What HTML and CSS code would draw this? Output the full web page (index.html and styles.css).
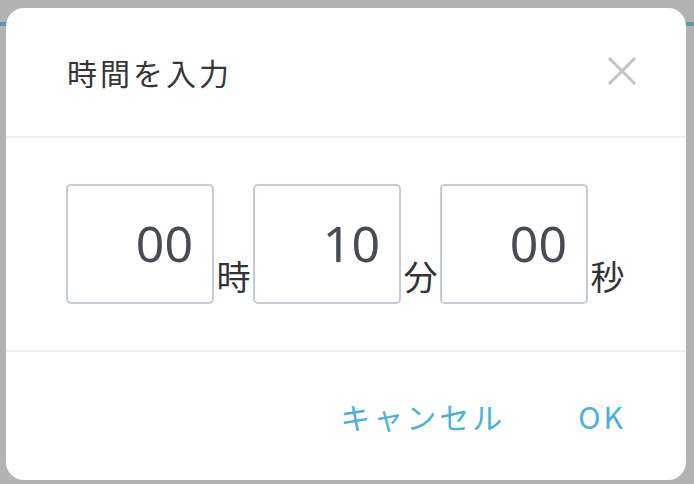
FILE: index.html
```html
<!DOCTYPE html>
<html lang="ja">
<head>
<meta charset="utf-8">
<title>時間を入力</title>
<link rel="stylesheet" href="styles.css">
</head>
<body>
<div class="page">
  <div class="page-bar"></div>
</div>
<div class="overlay">
  <div class="dialog">
    <div class="dialog-header">
      <h1 class="dialog-title">時間を入力</h1>
      <button class="close-btn" aria-label="閉じる">
        <svg width="30" height="30" viewBox="0 0 30 30"><path d="M2 2 L28 28 M28 2 L2 28" stroke="#c3c3c3" stroke-width="3" fill="none"/></svg>
      </button>
    </div>
    <div class="dialog-body">
      <div class="time-field"><span class="time-value">00</span></div>
      <span class="time-unit">時</span>
      <div class="time-field"><span class="time-value">10</span></div>
      <span class="time-unit">分</span>
      <div class="time-field"><span class="time-value">00</span></div>
      <span class="time-unit">秒</span>
    </div>
    <div class="dialog-footer">
      <button class="text-btn">キャンセル</button>
      <button class="text-btn">OK</button>
    </div>
  </div>
</div>
</body>
</html>
```
FILE: styles.css
```css
html, body {
  margin: 0;
  padding: 0;
}
body {
  width: 694px;
  height: 484px;
  background: #b3b3b3;
  overflow: hidden;
  position: relative;
  font-family: "Noto Sans CJK JP", "Noto Sans", sans-serif;
}
.page {
  padding-top: 22px;
}
.page-bar {
  height: 4px;
  background: #5f96a8;
}
.overlay {
  position: absolute;
  left: 6px;
  top: 8px;
}
.dialog {
  width: 680px;
  height: 472px;
  background: #ffffff;
  border-radius: 18px;
  display: flex;
  flex-direction: column;
  overflow: hidden;
}
.dialog-header {
  height: 128px;
  flex: none;
  display: flex;
  align-items: center;
  justify-content: space-between;
  padding: 0 49px 0 61px;
  border-bottom: 2px solid #efefef;
}
.dialog-title {
  margin: 0;
  font-size: 30px;
  font-weight: normal;
  letter-spacing: 3px;
  color: #363636;
  line-height: 1;
}
.close-btn {
  border: 0;
  background: none;
  padding: 0;
  width: 30px;
  height: 30px;
  display: flex;
  margin-top: -3px;
}
.dialog-body {
  height: 214px;
  flex: none;
  box-sizing: border-box;
  display: flex;
  align-items: stretch;
  padding: 46px 0 46px 60px;
  border-bottom: 2px solid #efefef;
}
.time-field {
  width: 148px;
  height: 120px;
  box-sizing: border-box;
  border: 2px solid #c2cad6;
  border-radius: 5px;
  display: flex;
  align-items: center;
  justify-content: flex-end;
  padding-right: 19px;
}
.time-value {
  font-family: "Noto Sans", sans-serif;
  font-size: 50px;
  line-height: 1;
  color: #474c52;
  margin-top: -2px;
}
.time-unit {
  width: 39px;
  text-align: center;
  align-self: flex-end;
  font-size: 34px;
  line-height: 34px;
  color: #333333;
  margin-bottom: 11px;
}
.dialog-footer {
  flex: 1;
  display: flex;
  align-items: center;
  justify-content: flex-end;
  gap: 73px;
  padding-right: 60px;
}
.text-btn {
  border: 0;
  background: none;
  padding: 0;
  font-family: "Noto Sans CJK JP", "Noto Sans", sans-serif;
  font-size: 30px;
  letter-spacing: 3px;
  color: #4cb1d6;
  line-height: 1;
}
```
